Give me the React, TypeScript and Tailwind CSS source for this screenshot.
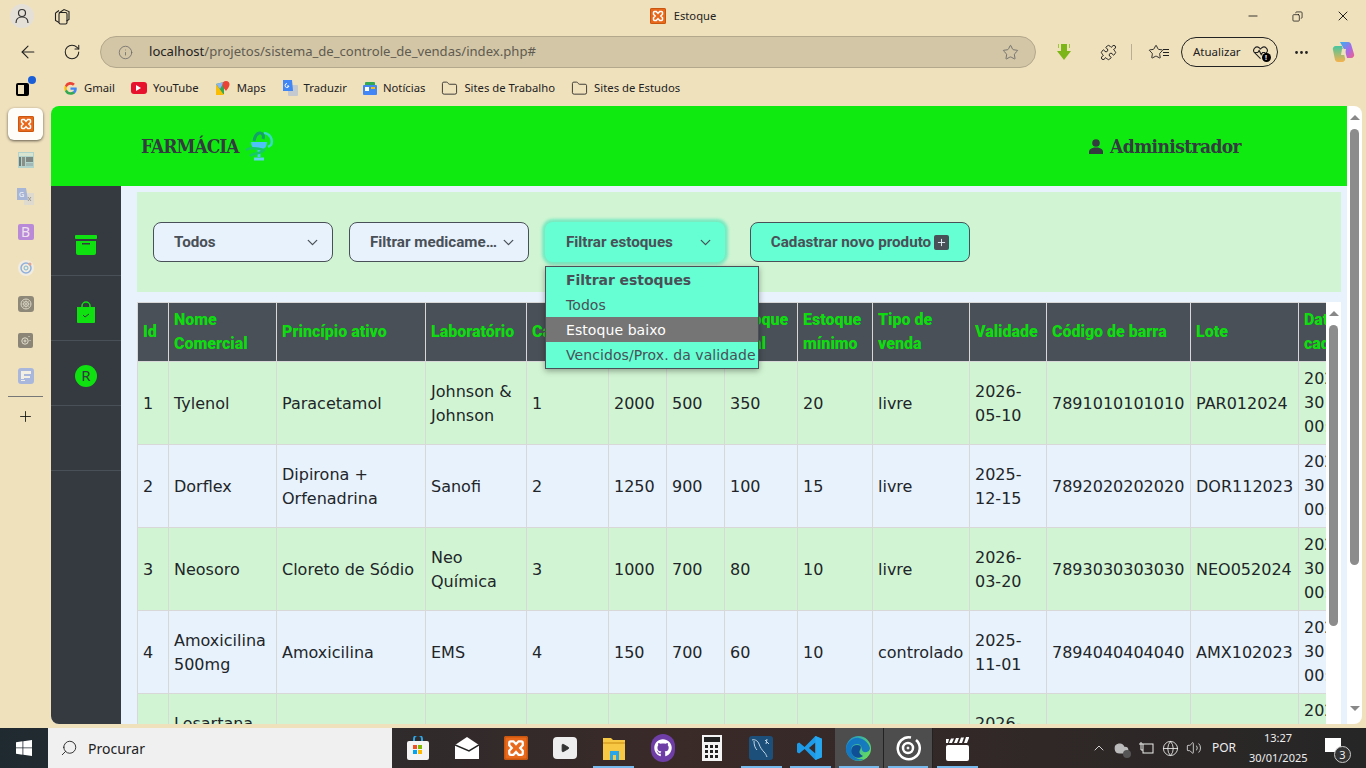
import React from 'react';
import { ArrowLeft, RotateCw, Info, Star, Puzzle, Minus, Copy, X, Plus, MoreHorizontal, ChevronDown, ChevronUp, Search, Folder, Volume2, Globe, Cloud, Play } from 'lucide-react';
import { FaGithub } from 'react-icons/fa';

const rows = [
  ['1', ['Tylenol'], ['Paracetamol'], ['Johnson &', 'Johnson'], '1', '2000', '500', '350', '20', 'livre', ['2026-', '05-10'], '7891010101010', 'PAR012024'],
  ['2', ['Dorflex'], ['Dipirona +', 'Orfenadrina'], ['Sanofi'], '2', '1250', '900', '100', '15', 'livre', ['2025-', '12-15'], '7892020202020', 'DOR112023'],
  ['3', ['Neosoro'], ['Cloreto de Sódio'], ['Neo', 'Química'], '3', '1000', '700', '80', '10', 'livre', ['2026-', '03-20'], '7893030303030', 'NEO052024'],
  ['4', ['Amoxicilina', '500mg'], ['Amoxicilina'], ['EMS'], '4', '150', '700', '60', '10', 'controlado', ['2025-', '11-01'], '7894040404040', 'AMX102023'],
  ['5', ['Losartana', '50mg'], ['Losartana'], ['Medley'], '5', '300', '400', '90', '10', 'livre', ['2026-', '01-15'], '7895050505050', 'LOS012024'],
] as const;

const widths = [31, 108, 149, 101, 82, 58, 58, 73, 75, 97, 77, 144, 108, 80];
const heads: string[][] = [['Id'], ['Nome', 'Comercial'], ['Princípio ativo'], ['Laboratório'], ['Categoria'], ['Valor'], ['Valor'], ['Estoque', 'atual'], ['Estoque', 'mínimo'], ['Tipo de', 'venda'], ['Validade'], ['Código de barra'], ['Lote'], ['Data de', 'cadastro']];

function Lines({ l }: { l: readonly string[] }) {
  return <>{l.map((t, i) => <div key={i}>{t}</div>)}</>;
}

function Xampp({ s = 16 }: { s?: number }) {
  return (
    <svg width={s} height={s} viewBox="0 0 16 16">
      <rect width="16" height="16" rx="1.5" fill="#e9691c" />
      <rect x=".5" y=".5" width="15" height="15" rx="1.2" fill="none" stroke="#c9560f" />
      <path d="M4.500 3.500h1.800L8 5.400l1.700-1.900h1.800a1 1 0 0 1 1 1v1.700L10.800 8l1.700 1.800v1.700a1 1 0 0 1-1 1H9.700L8 10.600l-1.700 1.900H4.500a1 1 0 0 1-1-1V9.800L5.200 8 3.500 6.200V4.500a1 1 0 0 1 1-1z" fill="none" stroke="#fff" strokeWidth="1.500" />
    </svg>
  );
}

function Bookmark({ icon, label }: { icon: React.ReactNode; label: string }) {
  return <div className="flex items-center gap-[6px] mr-[16px]">{icon}<span className="text-[11.3px] text-[#222]">{label}</span></div>;
}

function SelectBox({ label, active, w }: { label: string; active?: boolean; w: string }) {
  return (
    <div className={`${w} h-[40px] flex items-center justify-between rounded-[8px] pr-[11px] font-bold text-[15.2px] text-[#495057] ${active ? 'pl-[21px] bg-[#66ffd3] shadow-[0_0_3px_3px_rgba(60,225,180,0.6)]' : 'pl-[20px] bg-[#e8f2fc] border border-[#495057]'}`} style={{ fontFamily: 'Roboto, sans-serif' }}>
      <span className="whitespace-nowrap overflow-hidden text-ellipsis">{label}</span>
      <ChevronDown size={17} strokeWidth={1.8} className="shrink-0" />
    </div>
  );
}

function TaskIcon({ children, on, lit }: { children: React.ReactNode; on?: boolean; lit?: boolean }) {
  return <div className={`w-[49.1px] h-full flex items-center justify-center relative ${lit ? 'bg-[#4d4d4d] border-r border-[#222]' : ''}`}>{children}{on && <div className="absolute bottom-0 left-[4px] right-[4px] h-[2px] bg-[#76b9ed]" />}</div>;
}

function Scrollbar({ className, thumb, bottom }: { className: string; thumb: string; bottom?: boolean }) {
  return (
    <div className={`${className} w-[15px] bg-white flex flex-col items-center shrink-0`}>
      <div className="h-[23px] shrink-0 flex items-center justify-center"><div className="w-0 h-0 border-x-[5px] border-x-transparent border-b-[5px] border-b-[#888]" /></div>
      <div className={`w-[9px] ${thumb} bg-[#8c8c8c] rounded-[5px]`} />
      {bottom && <div className="mt-auto h-[25px] pb-[6px] flex items-center justify-center"><div className="w-0 h-0 border-x-[5px] border-x-transparent border-t-[5px] border-t-[#888]" /></div>}
    </div>
  );
}

function Rail({ children }: { children: React.ReactNode }) {
  return <div className="h-[36px] flex items-center justify-center">{children}</div>;
}

export default function App() {
  return (
    <div className="w-[1366px] h-[768px] overflow-hidden flex flex-col bg-[#f0e1bd]" style={{ fontFamily: '"Noto Sans", sans-serif' }}>
      {/* tab row */}
      <div className="h-[34px] pb-[2px] flex items-center relative shrink-0">
        <div className="ml-[10px] w-[24px] h-[24px] rounded-full bg-[#e4e0d8] flex items-center justify-center">
          <svg width="14" height="16" viewBox="0 0 14 16" fill="none" stroke="#333" strokeWidth="1.2"><circle cx="7" cy="5" r="3.500" /><path d="M1 15c0-4 2-6 6-6s6 2 6 6" /></svg>
        </div>
        <svg className="ml-[20px]" width="16" height="17" viewBox="0 0 16 17" fill="none" stroke="#222" strokeWidth="1.100"><path d="M5 5l5-3.500 5 2v8l-2.500 1.500" /><rect x="5" y="4.500" width="8" height="11.500" rx="1.500" /><path d="M1.500 5 5 2.500M1.500 5v7.500L5 14.500" /></svg>
        <div className="flex-1 flex items-center justify-center gap-[8px] pl-[50px]">
          <Xampp />
          <span className="text-[11.2px] text-[#222]">Estoque</span>
        </div>
        <div className="flex items-center gap-[32px] mr-[15px] text-[#111]">
          <Minus size={14} strokeWidth={1.4} />
          <Copy size={11} strokeWidth={1.6} className="-scale-x-100" />
          <X size={16} strokeWidth={1.4} />
        </div>
      </div>
      {/* address row */}
      <div className="h-[36px] flex items-center shrink-0">
        <ArrowLeft size={20} strokeWidth={1.3} className="ml-[18px] text-[#222]" />
        <RotateCw size={18} strokeWidth={1.4} className="ml-[25px] text-[#222]" />
        <div className="ml-[19px] w-[936px] h-[32px] rounded-full bg-[#d3c6a6] border border-[#b3a88c] flex items-center pl-[17px] pr-[16px]">
          <Info size={15} strokeWidth={1.2} className="text-[#666]" />
          <span className="ml-[16px] text-[13.1px] text-[#222]">localhost<span className="text-[#5f5b50]">/projetos/sistema_de_controle_de_vendas/index.php#</span></span>
          <Star size={17} strokeWidth={1.2} className="ml-auto text-[#666]" />
        </div>
        <svg className="ml-[19px]" width="18" height="18" viewBox="0 0 18 18"><path d="M6 1h6v7h4l-7 9-7-9h4z" fill="#7cb518" /><path d="M3 1h1v4H3zM14 1h1v4h-1z" fill="#9ac83a" /></svg>
        <Puzzle size={17} strokeWidth={1.4} className="ml-[27px] text-[#222]" />
        <div className="ml-[14px] w-px h-[16px] bg-[#b8ae98]" />
        <div className="ml-[16px] flex items-center text-[#222]"><Star size={16} strokeWidth={1.4} /><div className="flex flex-col gap-[2px] ml-[-1px]"><div className="w-[6px] h-px bg-[#222]" /><div className="w-[6px] h-px bg-[#222]" /><div className="w-[6px] h-px bg-[#222]" /></div></div>
        <div className="ml-[12px] w-[97px] h-[30px] rounded-full border border-[#222] flex items-center pl-[11px] gap-[11px]">
          <span className="text-[11.5px] text-[#222]">Atualizar</span>
          <div className="relative"><svg width="17" height="15" viewBox="0 0 24 22" fill="none" stroke="#222" strokeWidth="1.6"><path d="M12 20 3 11a5 5 0 0 1 7-7l2 2 2-2a5 5 0 0 1 7 7l-3 3" /><path d="M3 11h5l2-3 3 6 2-3h4" /></svg><div className="absolute -right-[2px] -bottom-[2px] w-[9px] h-[9px] rounded-full bg-black text-white text-[7px] leading-[9px] text-center font-bold">!</div></div>
        </div>
        <MoreHorizontal size={17} className="ml-[15px] text-[#222]" />
        <svg className="ml-[22px]" width="23" height="22" viewBox="0 0 23 22"><defs><linearGradient id="cp" x1="0" y1="0" x2="1" y2="1"><stop offset="0" stopColor="#2fb5f0" /><stop offset=".55" stopColor="#a76be8" /><stop offset="1" stopColor="#f0608a" /></linearGradient><linearGradient id="cq" x1="0" y1="0" x2="0" y2="1"><stop offset="0" stopColor="#46c6a0" /><stop offset="1" stopColor="#f6b24d" /></linearGradient></defs><path d="M8 1h8a3 3 0 0 1 3 2l3 10a3 3 0 0 1-3 4h-4l-2-7z" fill="url(#cp)" /><path d="M4 5h6l3 12a3 3 0 0 1-3 4H6a3 3 0 0 1-3-2L1 9a3 3 0 0 1 3-4z" fill="url(#cq)" /><path d="M10 8h4l-1 6H9z" fill="#f0e1bd" /></svg>
      </div>
      {/* bookmarks */}
      <div className="h-[36px] flex items-center shrink-0">
        <div className="ml-[16px] w-[16px] h-[16px] relative mr-[31px]"><div className="w-[13px] h-[13px] mt-[3px] border-2 border-black rounded-[2px] border-r-[5px]" /><div className="absolute -top-[4px] right-[-4px] w-[8px] h-[8px] rounded-full bg-[#1a5fd8]" /></div>
        <Bookmark label="Gmail" icon={<svg width="15" height="15" viewBox="0 0 24 24"><path d="M22 12.200c0-.7-.1-1.400-.2-2H12v3.800h5.600a4.800 4.800 0 0 1-2.100 3.200v2.600h3.400c2-1.800 3.100-4.500 3.100-7.600z" fill="#4285f4" /><path d="M12 22c2.800 0 5.100-.9 6.900-2.500l-3.400-2.600c-.9.600-2.100 1-3.500 1-2.700 0-5-1.800-5.800-4.300H3.100v2.700A10 10 0 0 0 12 22z" fill="#34a853" /><path d="M6.200 13.600a6 6 0 0 1 0-3.800V7.100H3.100a10 10 0 0 0 0 9.200z" fill="#fbbc05" /><path d="M12 6c1.500 0 2.900.5 4 1.500l3-3A10 10 0 0 0 3.100 7.100l3.100 2.700C7 7.800 9.300 6 12 6z" fill="#ea4335" /></svg>} />
        <Bookmark label="YouTube" icon={<div className="w-[16px] h-[12px] rounded-[3px] bg-[#e8112d] flex items-center justify-center"><div className="w-0 h-0 border-y-[3px] border-y-transparent border-l-[5px] border-l-white" /></div>} />
        <Bookmark label="Maps" icon={<svg width="16" height="16" viewBox="0 0 16 16"><path d="M1 4l8-2v12l-8 1z" fill="#34a853" /><path d="M1 4l8 11H1z" fill="#fbbc04" /><path d="M1 4l4 5 4-7z" fill="#8ab4f8" /><path d="M11 1a3.500 3.500 0 0 1 3.500 3.500C14.500 7 11 11 11 11S7.500 7 7.500 4.500A3.500 3.500 0 0 1 11 1z" fill="#ea4335" /></svg>} />
        <Bookmark label="Traduzir" icon={<svg width="16" height="16" viewBox="0 0 16 16"><rect x="6" y="5" width="10" height="11" rx="1" fill="#c4c9d0" /><path d="M1 0h9l1 11H1z" fill="#4285f4" /><path d="M5 3.500a2 2 0 1 0 2 2.500H5" fill="none" stroke="#fff" /></svg>} />
        <Bookmark label="Notícias" icon={<svg width="14" height="14" viewBox="0 0 14 14"><rect x="2" y="1" width="10" height="4" rx="1" fill="#34a853" /><rect x="0" y="4" width="14" height="10" rx="1" fill="#4285f4" /><rect x="2" y="6" width="4" height="4" fill="#fff" /><rect x="8" y="6" width="4" height="2" fill="#fbbc04" /></svg>} />
        <Bookmark label="Sites de Trabalho" icon={<Folder size={17} strokeWidth={1.2} className="text-[#222]" />} />
        <Bookmark label="Sites de Estudos" icon={<Folder size={17} strokeWidth={1.2} className="text-[#222]" />} />
      </div>
      {/* body */}
      <div className="h-[618px] flex shrink-0">
        {/* rail */}
        <div className="w-[51px] shrink-0 flex flex-col">
          <div className="mx-[8px] mt-[2px] mb-[2px] h-[32px] rounded-[6px] bg-[#fffdf8] shadow-[0_1px_3px_rgba(0,0,0,0.6)] flex items-center justify-center"><Xampp /></div>
          <Rail><svg width="16" height="16" viewBox="0 0 16 16"><rect width="16" height="16" fill="#b4d2cc" /><rect x="1" y="1" width="14" height="3" fill="#d8e4d0" /><rect x="1" y="5" width="2" height="9" fill="#6f7a74" /><rect x="4" y="5" width="3" height="9" fill="#8a9088" /><rect x="8" y="5" width="7" height="5" fill="#7e8883" /><rect x="8" y="11" width="7" height="3" fill="#a2b8b6" /></svg></Rail>
          <Rail><svg width="17" height="17" viewBox="0 0 17 17"><rect x="7" y="5" width="10" height="12" fill="#dedad0" /><path d="M0 0h9l2 12H0z" fill="#a7b6d6" /><text x="2" y="8.500" fontSize="7" fill="#fff">G</text><path d="M11 9l3 4m0-4l-3 4" stroke="#9a9a94" /></svg></Rail>
          <Rail><div className="w-[16px] h-[16px] rounded-[2px] bg-[#b98ad8] text-[#f0e1ee] text-[14px] leading-[16px] text-center">B</div></Rail>
          <Rail><svg width="16" height="16" viewBox="0 0 16 16" fill="none"><circle cx="8" cy="8" r="8" fill="#f1ece0" /><circle cx="8" cy="8" r="5" stroke="#8fb0dc" strokeWidth="1.500" /><circle cx="8" cy="8" r="2" stroke="#7fb8d0" /><circle cx="12" cy="4" r="1.500" fill="#e6a48c" /></svg></Rail>
          <Rail><div className="w-[16px] h-[16px] rounded-[3px] bg-[#8e8878] flex items-center justify-center"><svg width="12" height="12" viewBox="0 0 12 12" fill="none" stroke="#d8d4c4"><circle cx="6" cy="6" r="5" /><circle cx="6" cy="6" r="2.500" /><path d="M1 6h10M6 1v10M2.500 2.500l7 7M9.500 2.500l-7 7" strokeWidth=".5" /></svg></div></Rail>
          <Rail><div className="w-[15px] h-[15px] rounded-[2px] bg-[#8a8576] flex items-center justify-center"><svg width="11" height="11" viewBox="0 0 11 11" fill="none" stroke="#e4e0d0"><circle cx="5" cy="6" r="3.200" /><circle cx="5" cy="6" r="1" /><path d="M9 1v1M10 5v1" /></svg></div></Rail>
          <Rail><div className="w-[16px] h-[16px] rounded-[3px] bg-[#a9b7dc] flex items-center justify-center"><svg width="12" height="12" viewBox="0 0 12 12" fill="#f3efe2"><path d="M1 1h10v3H4v2h6v2H4v1H1z" /><rect x="1" y="10" width="4" height="1" /></svg></div></Rail>
          <div className="mx-[8px] mt-[2px] h-px bg-[#777]" />
          <div className="flex justify-center mt-[11px]"><Plus size={17} strokeWidth={1.2} className="text-[#111]" /></div>
        </div>
        {/* page */}
        <div className="w-[1296px] h-full rounded-l-[8px] overflow-hidden flex flex-col bg-[#e8f2fc] relative">
          <div className="h-[80px] shrink-0 bg-[#0fea10] flex items-center justify-between pl-[90px] pr-[106px] text-[#343a40]">
            <div className="flex items-center gap-[6px] font-bold text-[19px] tracking-[-1px]" style={{ fontFamily: '"DejaVu Serif Condensed", "DejaVu Serif", serif' }}>
              FARMÁCIA
              <svg width="29" height="32" viewBox="0 0 29 32" fill="none"><path d="M19 3a8.500 8.500 0 0 1 7 12l-3 2" stroke="#3ad9c8" strokeWidth="2.500" /><path d="M6 12h16c0 5-3 8-8 8s-8-3-8-8z" fill="#4fc3f7" /><path d="M14 20v7" stroke="#4fc3f7" strokeWidth="3" /><path d="M9 29h10" stroke="#62cff5" strokeWidth="3" /><path d="M1 20c4-3 14-1 18 0-3 4-11 3-14 6" stroke="#17c964" strokeWidth="2.500" /><path d="M9 11c1-5 3-8 6-8s4 3 3 6" stroke="#14a06a" strokeWidth="3" /></svg>
            </div>
            <div className="flex items-center gap-[7px] font-bold text-[19px] tracking-[-0.6px]" style={{ fontFamily: '"DejaVu Serif Condensed", "DejaVu Serif", serif' }}>
              <svg width="14" height="15" viewBox="0 0 14 15" fill="#343a40"><circle cx="7" cy="4" r="3.800" /><path d="M0 15v-2c0-3 3-4.500 7-4.500s7 1.500 7 4.500v2z" /></svg>
              <span>Administrador</span>
            </div>
          </div>
          <div className="flex-1 flex min-h-0">
            <div className="w-[70px] shrink-0 bg-[#343a40] pt-[24px] flex flex-col">
              <div className="h-[66px] pt-[5px] border-b border-[#495057] flex items-center justify-center">
                <svg width="22" height="20" viewBox="0 0 22 20"><rect width="22" height="4" rx="1" fill="#0fe010" /><path d="M1 6h20v12a2 2 0 0 1-2 2H3a2 2 0 0 1-2-2z" fill="#0fe010" /><rect x="7" y="8" width="8" height="1.500" fill="#343a40" /></svg>
              </div>
              <div className="h-[65px] pt-[7px] border-b border-[#495057] flex items-center justify-center">
                <svg width="20" height="22" viewBox="0 0 20 22"><path d="M6 6V5a4 4 0 0 1 8 0v1" fill="none" stroke="#0fe010" strokeWidth="1.500" /><path d="M1 6h18v15a1 1 0 0 1-1 1H2a1 1 0 0 1-1-1z" fill="#0fe010" /><path d="M7 14l2 2 4-3" fill="none" stroke="#343a40" strokeWidth="1" /></svg>
              </div>
              <div className="h-[65px] pt-[5px] border-b border-[#495057] flex items-center justify-center">
                <div className="w-[22px] h-[22px] rounded-full bg-[#0fe010] flex items-center justify-center text-[15px] text-[#343a40]">R</div>
              </div>
              <div className="h-[65px] border-b border-[#495057]" />
            </div>
            <div className="flex-1 min-w-0 pl-[16px] pr-[6px] pt-[6px] flex flex-col relative">
              <div className="h-[100px] shrink-0 bg-[#d1f5d3] pl-[16px] flex items-center">
                <SelectBox w="w-[180px]" label="Todos" />
                <div className="w-[16px]" />
                <SelectBox w="w-[180px]" label="Filtrar medicamentos" />
                <div className="w-[16px]" />
                <SelectBox w="w-[180px]" label="Filtrar estoques" active />
                <div className="w-[25px]" />
                <div className="w-[220px] h-[40px] rounded-[8px] bg-[#66ffd3] border border-[#495057] flex items-center justify-center gap-[3px] font-bold text-[15.2px] text-[#495057]" style={{ fontFamily: 'Roboto, sans-serif' }}>
                  Cadastrar novo produto
                  <div className="w-[15px] h-[15px] rounded-[2px] bg-[#495057] flex items-center justify-center"><Plus size={11} className="text-[#e8f2fc]" /></div>
                </div>
              </div>
              <div className="h-[10px] shrink-0" />
              <div className="flex-1 min-h-0 flex bg-[#e8f2fc]">
                <div className="w-[1189px] overflow-hidden">
                  <table className="border-collapse table-fixed text-[16px] text-[#212529] leading-[24px]" style={{ width: widths.reduce((a, b) => a + b, 0), fontFamily: '"DejaVu Sans", sans-serif' }}>
                    <colgroup>{widths.map((w, i) => <col key={i} style={{ width: w }} />)}</colgroup>
                    <thead>
                      <tr className="h-[59px] bg-[#495057]">
                        {heads.map((h, i) => (
                          <th key={i} className="border border-[#d8d8d8] px-[5px] text-left text-[#0fdc0f] font-black text-[16px] overflow-hidden whitespace-nowrap" style={{ fontFamily: 'Roboto, sans-serif' }}><Lines l={h} /></th>
                        ))}
                      </tr>
                    </thead>
                    <tbody>
                      {rows.map((r, ri) => (
                        <tr key={ri} className={`h-[83px] ${ri % 2 === 0 ? 'bg-[#d1f5d3]' : 'bg-[#e8f2fc]'}`}>
                          {r.map((c, ci) => (
                            <td key={ci} className="border border-[#d8d8d8] px-[5px] pt-[2px] whitespace-nowrap">{typeof c === 'string' ? c : <Lines l={c} />}</td>
                          ))}
                          <td className="border border-[#d8d8d8] px-[5px] whitespace-nowrap"><div>2025-01-</div><div>30</div><div>00:00:00</div></td>
                        </tr>
                      ))}
                    </tbody>
                  </table>
                </div>
                <Scrollbar className="h-full" thumb="h-[301px]" />
              </div>
              {/* dropdown */}
              <div className="absolute left-[424px] top-[80px] w-[214px] h-[103px] bg-[#66ffd3] border border-[#495057] shadow-[0_2px_6px_rgba(0,0,0,0.35)] text-[14px] tracking-[0.08px] text-[#495057] flex flex-col" style={{ fontFamily: '"DejaVu Sans", sans-serif' }}>
                <div className="h-[25px] pl-[20px] pt-[2px] flex items-center font-bold tracking-[-0.05px]">Filtrar estoques</div>
                <div className="h-[25px] pl-[20px] pt-[2px] flex items-center">Todos</div>
                <div className="h-[25px] pl-[20px] pt-[2px] flex items-center bg-[#757575] text-white">Estoque baixo</div>
                <div className="h-[25px] pl-[20px] pt-[2px] flex items-center whitespace-nowrap">Vencidos/Prox. da validade</div>
              </div>
            </div>
          </div>
        </div>
        <Scrollbar className="h-full rounded-r-[8px]" thumb="h-[436px]" bottom />
      </div>
      <div className="h-[4px] shrink-0" />
      {/* taskbar */}
      <div className="h-[40px] shrink-0 flex items-stretch bg-gradient-to-r from-[#1f2a30] via-[#3a2a28] to-[#262626] text-white">
        <div className="w-[48px] flex items-center justify-center"><svg width="16" height="16" viewBox="0 0 16 16" fill="#fff"><path d="M0 2.200 6.500 1.300V7.500H0zM7.300 1.200 16 0V7.500H7.300zM0 8.300H6.500V14.700L0 13.800zM7.300 8.300H16V16L7.300 14.800z" /></svg></div>
        <div className="w-[344px] bg-[#f0f0f0] flex items-center pl-[12px] gap-[10px] text-[#222] text-[14px]"><Search size={18} strokeWidth={1.2} className="-scale-x-100" /><span>Procurar</span></div>
        <div className="pl-[1px] flex items-stretch">
          <TaskIcon><svg width="22" height="24" viewBox="0 0 22 24"><path d="M7 6V3a4 4 0 0 1 8 0v3" fill="none" stroke="#2aa5e8" strokeWidth="2" /><rect y="5" width="22" height="19" rx="2" fill="#f4f4f4" /><rect x="6" y="9" width="4" height="4" fill="#f25022" /><rect x="11" y="9" width="4" height="4" fill="#7fba00" /><rect x="6" y="14" width="4" height="4" fill="#00a4ef" /><rect x="11" y="14" width="4" height="4" fill="#ffb900" /></svg></TaskIcon>
          <TaskIcon><svg width="24" height="22" viewBox="0 0 24 22"><path d="M0 8 12 0l12 8v14H0z" fill="#fff" /><path d="M0 8l14 6 10-6" fill="none" stroke="#222" strokeWidth="1.500" /></svg></TaskIcon>
          <TaskIcon><Xampp s={24} /></TaskIcon>
          <TaskIcon><div className="w-[24px] h-[22px] rounded-[4px] bg-[#eee] flex items-center justify-center"><Play size={10} fill="#333" className="text-[#333]" /></div></TaskIcon>
          <TaskIcon on><svg width="22" height="24" viewBox="0 0 22 24"><path d="M0 2h8l2 2h12v20H0z" fill="#f6c844" /><path d="M0 6h22v2H0z" fill="#e0a92a" /><rect x="7" y="15" width="9" height="9" fill="#2aa5e8" /><rect x="10" y="19" width="3" height="5" fill="#f6c844" /></svg></TaskIcon>
          <TaskIcon><div className="w-[24px] h-[28px] rounded-full bg-[#6e3ea6] flex items-center justify-center"><FaGithub size={18} className="text-white" /></div></TaskIcon>
          <TaskIcon><svg width="20" height="26" viewBox="0 0 20 26"><rect width="20" height="26" fill="#f4f4f4" /><rect x="2" y="2" width="16" height="5" fill="#222" /><g fill="#222"><rect x="3" y="10" width="3" height="3" /><rect x="8" y="10" width="3" height="3" /><rect x="13" y="10" width="3" height="3" /><rect x="3" y="15" width="3" height="3" /><rect x="8" y="15" width="3" height="3" /><rect x="13" y="15" width="3" height="3" /><rect x="3" y="20" width="3" height="3" /><rect x="8" y="20" width="3" height="3" /><rect x="13" y="20" width="3" height="3" /></g></svg></TaskIcon>
          <TaskIcon on><svg width="24" height="24" viewBox="0 0 24 24"><rect width="24" height="24" rx="3" fill="#1c4f7a" /><path d="M3 4c3-1 6 1 7 4s3 6 5 8 2 3 3 5M5 5c0 4 1 7 3 9M16 4l4 4M18 3l-1 5" fill="none" stroke="#c5d8e6" strokeWidth="1" /></svg></TaskIcon>
          <TaskIcon on><svg width="26" height="26" viewBox="0 0 24 24"><path d="M17 1 7 11 2 7 0 8v8l2 1 5-4 10 10 6-2.500V3.500zM17 7v10l-6-5z" fill="#1e9be8" /><path d="M17 1l6 2.500v17L17 23z" fill="#26a6ef" /></svg></TaskIcon>
          <TaskIcon on lit><svg width="25" height="25" viewBox="0 0 25 25"><defs><linearGradient id="ed" x1="0" y1="0" x2="1" y2="0.6"><stop offset="0" stopColor="#1a8fd6" /><stop offset="1" stopColor="#63db62" /></linearGradient></defs><circle cx="12.500" cy="12.500" r="12.500" fill="url(#ed)" /><path d="M0 13C1 5 8 1 13 2s10 5 11 10c0 4-5 5-7 3.500S17 8 11 8 4 14 6 18s7 6 12 5c-3 2-7 2-10 1S0 19 0 13z" fill="#1172c4" opacity=".9" /><path d="M6 18c-2-4 0-9 5-9s4 3 3 5-1 4 3 6c-4 3-9 2-11-2z" fill="#0e4f96" /></svg></TaskIcon>
          <TaskIcon on lit><svg width="26" height="26" viewBox="0 0 26 26" fill="none" stroke="#fff"><path d="M21 5a11 11 0 1 1-5-2.500" strokeWidth="2.500" /><circle cx="13" cy="13" r="5" strokeWidth="2.500" /><circle cx="13" cy="13" r="1" fill="#fff" /></svg></TaskIcon>
          <TaskIcon on><svg width="23" height="25" viewBox="0 0 23 25"><rect y="9" width="23" height="16" rx="2" fill="#fff" /><path d="M0 3h3l-1 4H0zM5 2.500h3L6 7H3zM10 2h3l-2 5H8zM15 1.500h3L16 7h-3zM20 1h3v1l-2 5h-3z" fill="#fff" /></svg></TaskIcon>
        </div>
        <div className="flex-1 flex items-center justify-end text-[#eee]">
          <ChevronUp size={16} strokeWidth={1.3} />
          <div className="relative ml-[7px]"><Cloud size={15} fill="#bbb" className="text-[#bbb]" /><div className="absolute -right-[2px] -bottom-[2px] w-[8px] h-[8px] rounded-full bg-[#555]" /></div>
          <svg className="ml-[9px]" width="16" height="14" viewBox="0 0 16 14" fill="none" stroke="#eee"><rect x="5" y="3" width="10" height="9" /><path d="M3 1v5M1 3h4M3 6v3h2" /></svg>
          <Globe size={17} strokeWidth={1.2} className="ml-[8px]" />
          <Volume2 size={16} strokeWidth={1.2} className="ml-[7px]" />
          <span className="ml-[10px] text-[12px]">POR</span>
          <div className="ml-[13px] w-[58px] text-center text-[11px] leading-[20px]"><div>13:27</div><div>30/01/2025</div></div>
          <div className="ml-[18px] mr-[17px] w-[24px] h-[24px] relative"><div className="w-[16px] h-[14px] bg-white mt-[2px]" /><div className="absolute -right-[2px] -bottom-[3px] w-[17px] h-[17px] rounded-full border border-[#ccc] bg-[#333] text-[11px] leading-[15px] text-center">3</div></div>
        </div>
      </div>
    </div>
  );
}
